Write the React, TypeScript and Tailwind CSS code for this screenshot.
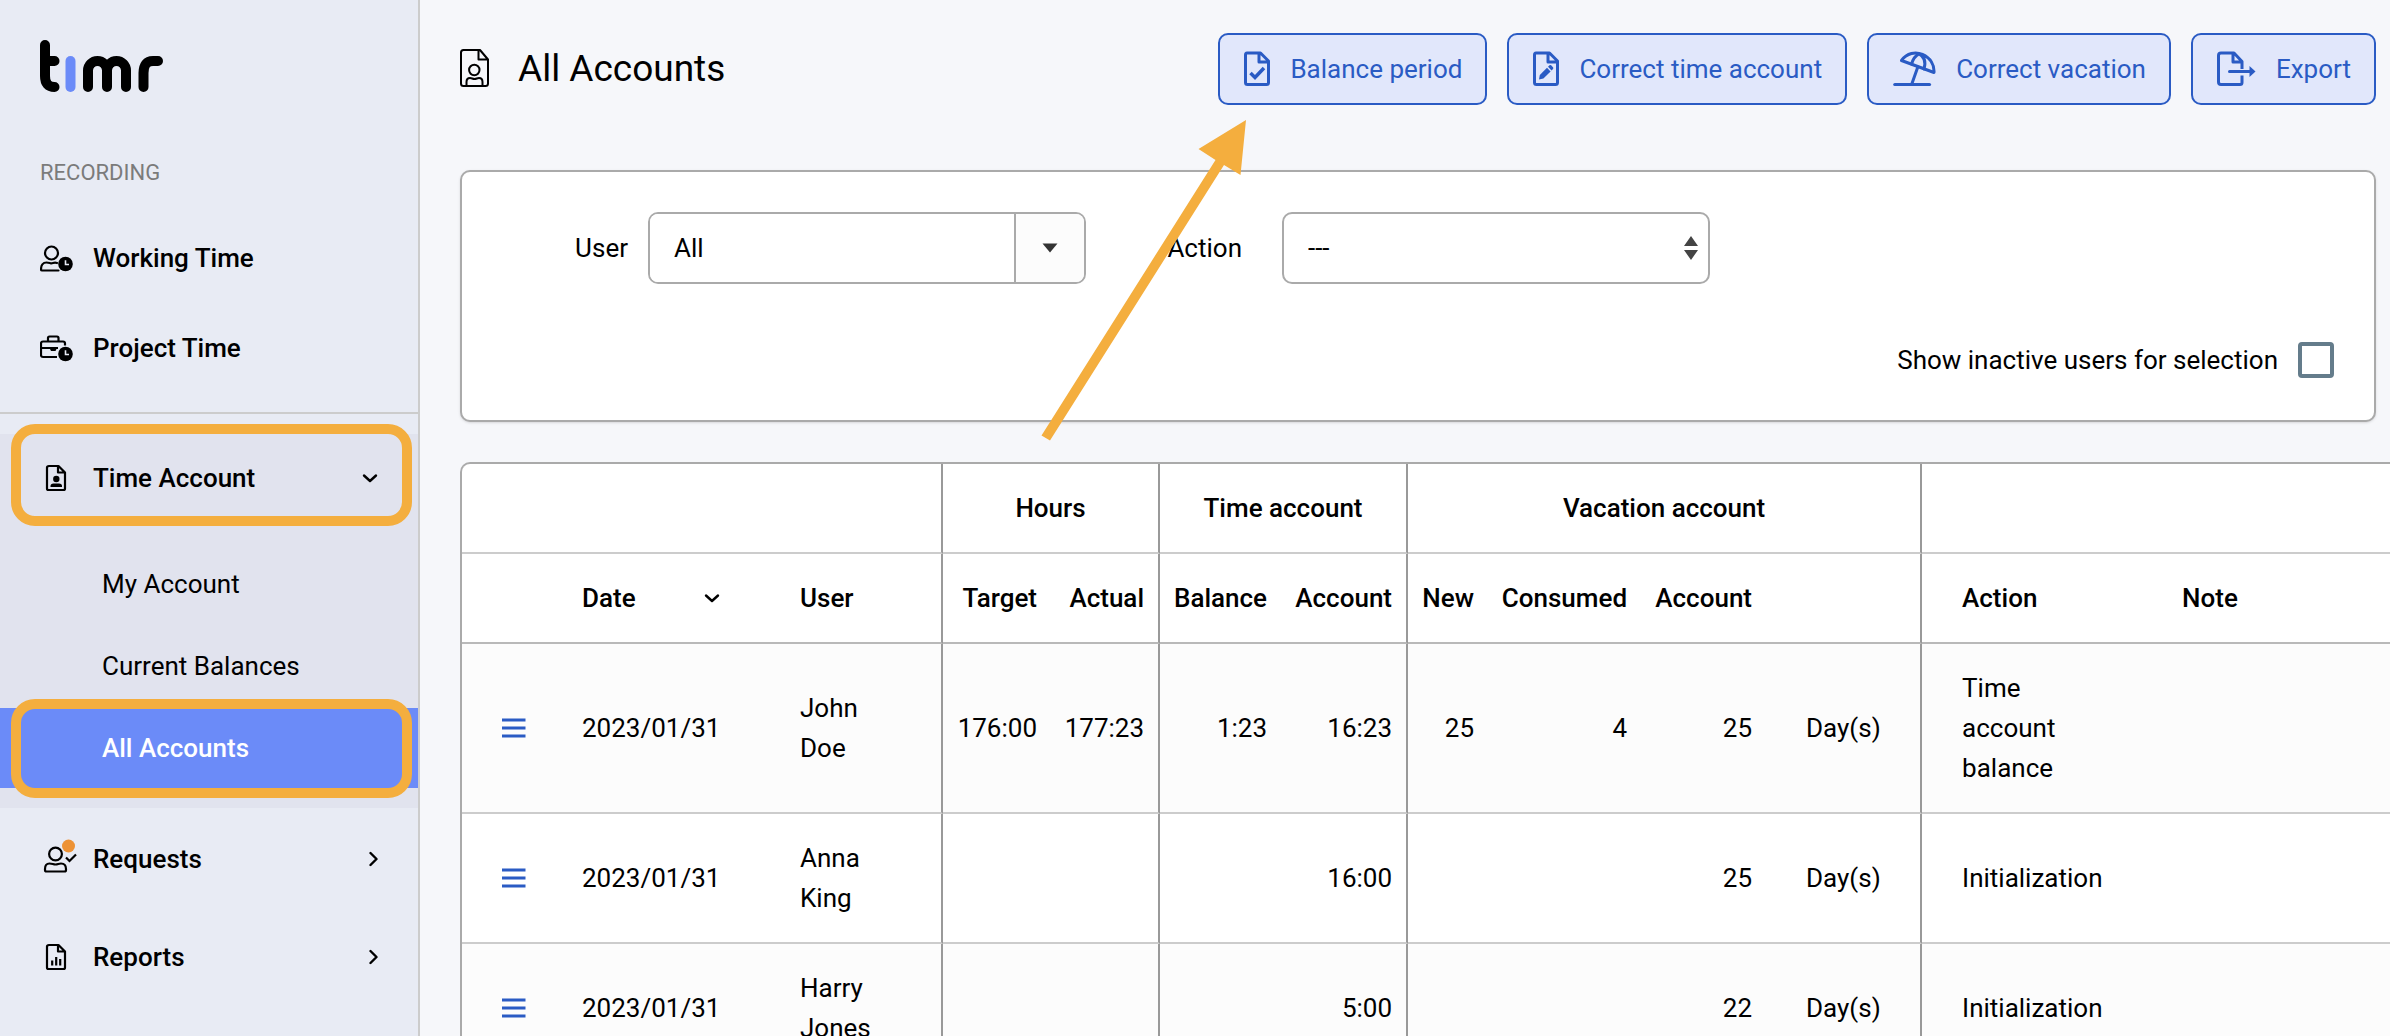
import React from "react";

type IconProps = { className?: string };

function Logo() {
  return (
    <svg width="124" height="52" viewBox="40 40 124 52" fill="none" strokeWidth="10" strokeLinecap="round" strokeLinejoin="round" role="img" aria-label="timr">
      <path d="M45 45V76Q45 87 54.500 87M45 61H54.500" stroke="#000" />
      <path d="M70.500 61V87" stroke="#6b8bf8" />
      <path d="M88 87V70.500a9.500 9.500 0 0 1 19 0V87M107 70.500a9.500 9.500 0 0 1 19 0V87" stroke="#000" />
      <path d="M143.500 87V73Q143.500 61 153 61H158" stroke="#000" />
    </svg>
  );
}

function ClockBadge() {
  return (
    <>
      <circle cx="25.500" cy="23" r="7.300" fill="currentColor" />
      <path d="M25.500 19.200V23.500H29" stroke="#e8ebf4" strokeWidth="1.600" fill="none" />
    </>
  );
}

function WorkingTimeIcon() {
  return (
    <svg width="38" height="34" viewBox="0 0 38 34" fill="none" className="shrink-0">
      <circle cx="11.500" cy="12" r="6.500" stroke="currentColor" strokeWidth="2.200" />
      <path d="M17 22C14 21 13 22.500 11 22.300C9.500 22 8.500 21.500 6.500 21.500C3 21.500 1 24.500 1 28.500Q1 29.500 2 29.500H18.500" stroke="currentColor" strokeWidth="2.200" strokeLinecap="round" />
      <ClockBadge />
    </svg>
  );
}

function ProjectTimeIcon() {
  return (
    <svg width="38" height="34" viewBox="0 0 38 34" fill="none" className="shrink-0">
      <path d="M25 14.500V12.500Q25 10.500 23 10.500H3Q1 10.500 1 12.500V24Q1 26 3 26H17M1 17H18M8 10V7Q8 5.500 9.500 5.500H17Q18.500 5.500 18.500 7V10" stroke="currentColor" strokeWidth="2.200" />
      <path d="M9.500 17H17L15.500 20H11Z" fill="currentColor" />
      <ClockBadge />
    </svg>
  );
}

function DocOutline() {
  return (
    <path d="M9 5H18.500L25 11.500V27.500Q25 29 23.500 29H8.500Q7 29 7 27.500V6.500Q7 5 9 5ZM18 5V11.500H25" stroke="currentColor" strokeWidth="2.200" strokeLinejoin="round" />
  );
}

function TimeAccountIcon() {
  return (
    <svg width="38" height="34" viewBox="0 0 38 34" fill="none" className="shrink-0">
      <DocOutline />
      <circle cx="16.300" cy="18" r="3.200" fill="currentColor" />
      <path d="M10.500 26V25Q10.500 22.500 13.500 22.500H19Q22 22.500 22 25V26Z" fill="currentColor" />
    </svg>
  );
}

function ReportsIcon() {
  return (
    <svg width="38" height="34" viewBox="0 0 38 34" fill="none" className="shrink-0">
      <DocOutline />
      <path d="M12.200 20.500V25.500M16.200 17V25.500M20.200 19V25.500" stroke="currentColor" strokeWidth="2.200" />
    </svg>
  );
}

function RequestsIcon() {
  return (
    <svg width="38" height="34" viewBox="0 0 38 34" fill="none" className="shrink-0 overflow-visible">
      <circle cx="15.500" cy="12" r="6.400" stroke="currentColor" strokeWidth="2.200" />
      <path d="M9.500 21.500C12.500 21.500 13 22.500 15.500 22.500S18.500 21.500 21 21.500C24.500 21.500 26 24 26 27V28Q26 29.500 24.500 29.500H6.500Q5 29.500 5 28V27C5 24 6.500 21.500 9.500 21.500Z" stroke="currentColor" strokeWidth="2.200" />
      <path d="M26 15.500L29.500 19L36 12.500" stroke="currentColor" strokeWidth="2.200" />
      <circle cx="28.500" cy="4" r="6.500" fill="#ed9235" />
    </svg>
  );
}

function ChevronDown({ className = "" }: IconProps) {
  return (
    <svg width="16" height="16" viewBox="0 0 16 16" fill="none" className={className}>
      <path d="M2 5.500L8 11L14 5.500" stroke="currentColor" strokeWidth="2.400" strokeLinecap="round" strokeLinejoin="round" />
    </svg>
  );
}

function ChevronRight({ className = "" }: IconProps) {
  return (
    <svg width="16" height="16" viewBox="0 0 16 16" fill="none" className={className}>
      <path d="M8.500 2L14.500 8L8.500 14" stroke="currentColor" strokeWidth="2.400" strokeLinecap="round" strokeLinejoin="round" />
    </svg>
  );
}

function TitleIcon() {
  return (
    <svg width="30" height="40" viewBox="0 0 30 40" fill="none" stroke="currentColor" strokeWidth="2" strokeLinejoin="round" className="shrink-0">
      <path d="M3.500 1H20L28 10.500V34.500Q28 37 25.500 37H3.500Q1 37 1 34.500V3.500Q1 1 3.500 1ZM18.500 1V10.500H28" />
      <circle cx="14.300" cy="21" r="5.200" />
      <path d="M6.500 36.500V33Q6.500 29 10 29C12 29 12.500 30 14.500 30S17 29 19 29Q22.500 29 22.500 33V36.500" />
    </svg>
  );
}

function ActionDocOutline() {
  return (
    <path d="M3 2H16.500L24.500 10V31.500Q24.500 33.500 22.500 33.500H3.500Q1.500 33.500 1.500 31.500V4Q1.500 2 3 2ZM15 2V11H24.500" stroke="currentColor" strokeWidth="3" strokeLinejoin="round" />
  );
}

function DocCheckIcon() {
  return (
    <svg width="26" height="36" viewBox="0 0 26 36" fill="none">
      <ActionDocOutline />
      <path d="M6.500 22L11 26.500L20 17" stroke="currentColor" strokeWidth="3.500" />
    </svg>
  );
}

function DocPenIcon() {
  return (
    <svg width="26" height="36" viewBox="0 0 26 36" fill="none">
      <ActionDocOutline />
      <path d="M6 28.500L6.800 24L14 16.800L17.600 20.400L10.400 27.600Z" fill="currentColor" />
      <path d="M15 15.800L16.500 14.300Q17.300 13.600 18.100 14.300L20 16.300Q20.700 17.100 20 17.900L18.600 19.400Z" fill="currentColor" />
    </svg>
  );
}

function BeachIcon() {
  return (
    <svg width="43" height="36" viewBox="0 0 43 36" fill="none" stroke="currentColor" strokeLinejoin="round" strokeLinecap="round">
      <path d="M8.500 9.500C14 2 22.500 0.500 29.500 3.500C37.500 7 41.500 14 41 21.500Z" strokeWidth="3" />
      <path d="M18.500 13C20 8 22.500 4.500 26 2.800C31.500 5.500 33 11 31 18" strokeWidth="3" />
      <path d="M24.800 16L18.800 33" strokeWidth="3" />
      <path d="M1.800 33.500H36.500" strokeWidth="3.200" />
    </svg>
  );
}

function ExportIcon() {
  return (
    <svg width="39" height="36" viewBox="0 0 39 36" fill="none" stroke="currentColor" strokeWidth="3" strokeLinejoin="round">
      <path d="M25 18V10.500L17 2H4Q1.500 2 1.500 4.500V31Q1.500 33.500 4 33.500H23Q25 33.500 25 31.500V24.500M16 2V11H25" />
      <path d="M12.500 20.500H34" strokeLinecap="round" />
      <path d="M32.500 15L38.500 20.500L32.500 26Z" fill="currentColor" stroke="none" />
    </svg>
  );
}

const actions = [
  { label: "Balance period", icon: <DocCheckIcon /> },
  { label: "Correct time account", icon: <DocPenIcon /> },
  { label: "Correct vacation", icon: <BeachIcon /> },
  { label: "Export", icon: <ExportIcon /> },
];

const rows = [
  { date: "2023/01/31", user: ["John", "Doe"], target: "176:00", actual: "177:23", balance: "1:23", account: "16:23", fresh: "25", consumed: "4", vacation: "25", action: "Time account balance" },
  { date: "2023/01/31", user: ["Anna", "King"], target: "", actual: "", balance: "", account: "16:00", fresh: "", consumed: "", vacation: "25", action: "Initialization" },
  { date: "2023/01/31", user: ["Harry", "Jones"], target: "", actual: "", balance: "", account: "5:00", fresh: "", consumed: "", vacation: "22", action: "Initialization" },
];

const navLink = "relative flex items-center gap-[15px] pl-10 pr-10 font-medium";
const subLink = "relative flex h-20 items-center pl-[102px]";
const ring = "pointer-events-none absolute left-[11px] right-[6px] z-10 rounded-[24px] border-[10px] border-[#f4ae3e]";
const groupHead = "border-b-2 border-[#ccc] px-[14px] py-6 font-medium";
const head = "border-b-2 border-[#b9b9b9] py-6 font-medium";
const cell = "border-b-2 border-[#ccc] py-6";
const groupEnd = "border-r-2 border-r-[#999]";

function Sidebar() {
  return (
    <aside className="w-[420px] shrink-0 border-r-2 border-[#ccc] bg-[#e8ebf4]">
      <a href="#home" className="mx-10 mt-10 block w-fit"><Logo /></a>
      <nav aria-label="Main">
        <h2 className="mt-[65px] pl-10 text-[22px] leading-8 text-[#7b7b7b]">RECORDING</h2>
        <div className="border-b-2 border-[#ccc] pt-6 pb-[19px]">
          <a href="#working-time" className={`${navLink} h-[90px]`}><WorkingTimeIcon />Working Time</a>
          <a href="#project-time" className={`${navLink} h-[90px]`}><ProjectTimeIcon />Project Time</a>
        </div>
        <div className="mt-5 bg-[#e1e3ee] pb-5">
          <button type="button" aria-expanded="true" className={`${navLink} h-[88px] w-full text-left`}>
            <TimeAccountIcon />Time Account
            <ChevronDown className="ml-auto" />
            <span className={`${ring} -top-[10px] -bottom-1`} />
          </button>
          <ul className="mt-[22px] flex flex-col gap-0.5">
            <li><a href="#my-account" className={subLink}>My Account</a></li>
            <li><a href="#current-balances" className={subLink}>Current Balances</a></li>
            <li>
              <a href="#all-accounts" aria-current="page" className={`${subLink} bg-[#6b8bf8] font-medium text-white`}>
                All Accounts
                <span className={`${ring} -top-[9px] -bottom-[10px]`} />
              </a>
            </li>
          </ul>
        </div>
        <div className="pt-0.5">
          <a href="#requests" className={`${navLink} h-[98px]`}><RequestsIcon />Requests<ChevronRight className="ml-auto" /></a>
          <a href="#reports" className={`${navLink} h-[98px]`}><ReportsIcon />Reports<ChevronRight className="ml-auto" /></a>
        </div>
      </nav>
    </aside>
  );
}

function Filters() {
  return (
    <form className="mr-[14px] rounded-[10px] border-2 border-[#aaa] bg-white px-10 pt-10 pb-6 shadow-sm">
      <div className="flex items-center">
        <label htmlFor="user" className="w-[126px] text-right">User</label>
        <div className="ml-5 flex h-[72px] w-[438px] overflow-hidden rounded-[10px] border-2 border-[#aaa]">
          <input id="user" type="text" defaultValue="All" className="min-w-0 flex-1 bg-white px-6 outline-none" />
          <button type="button" aria-label="Open user list" className="flex w-[70px] items-center justify-center border-l-2 border-[#aaa] bg-[#fcfcfc]">
            <svg width="16" height="10" viewBox="0 0 16 10"><path d="M0.500 0.500H15.500L8 9.500Z" fill="#333" /></svg>
          </button>
        </div>
        <label htmlFor="action" className="w-[156px] text-right">Action</label>
        <div className="relative ml-10 w-[428px]">
          <select id="action" className="h-[72px] w-full appearance-none rounded-[10px] border-2 border-[#aaa] bg-white px-6 outline-none">
            <option>---</option>
          </select>
          <svg width="14" height="24" viewBox="0 0 14 24" className="pointer-events-none absolute top-6 right-3"><path d="M7 0L14 10H0ZM7 24L14 14H0Z" fill="#444" /></svg>
        </div>
      </div>
      <div className="mt-10 flex h-[72px] items-center justify-end gap-5">
        <label htmlFor="inactive">Show inactive users for selection</label>
        <input id="inactive" type="checkbox" className="size-9 appearance-none rounded-[4px] border-4 border-[#647c8b] bg-white checked:bg-[#647c8b]" />
      </div>
    </form>
  );
}

function AccountsTable() {
  return (
    <div className="mt-10 overflow-hidden rounded-tl-[10px] border-t-2 border-l-2 border-[#aaa] bg-white">
      <table className="w-full table-fixed border-separate border-spacing-0 text-left leading-10">
        <colgroup>
          <col className="w-20" />
          <col className="w-[218px]" />
          <col className="w-[183px]" />
          <col className="w-[108px]" />
          <col className="w-[109px]" />
          <col className="w-[121px]" />
          <col className="w-[127px]" />
          <col className="w-20" />
          <col className="w-[153px]" />
          <col className="w-[125px]" />
          <col className="w-[156px]" />
          <col className="w-[220px]" />
          <col />
        </colgroup>
        <thead>
          <tr>
            <td colSpan={3} className={`${groupHead} ${groupEnd}`} />
            <th colSpan={2} scope="colgroup" className={`${groupHead} ${groupEnd} text-center`}>Hours</th>
            <th colSpan={2} scope="colgroup" className={`${groupHead} ${groupEnd} text-center`}>Time account</th>
            <th colSpan={4} scope="colgroup" className={`${groupHead} ${groupEnd} text-center`}>Vacation account</th>
            <td colSpan={2} className={groupHead} />
          </tr>
          <tr>
            <td className={head} />
            <th scope="col" className={`${head} px-10`}>
              <button type="button" className="flex w-full items-center justify-between">Date<ChevronDown /></button>
            </th>
            <th scope="col" className={`${head} ${groupEnd} pl-10`}>User</th>
            <th scope="col" className={`${head} pr-[14px] text-right`}>Target</th>
            <th scope="col" className={`${head} ${groupEnd} pr-[14px] text-right`}>Actual</th>
            <th scope="col" className={`${head} pr-[14px] text-right`}>Balance</th>
            <th scope="col" className={`${head} ${groupEnd} pr-[14px] text-right`}>Account</th>
            <th scope="col" className={`${head} pr-[14px] text-right`}>New</th>
            <th scope="col" className={`${head} pr-[14px] text-right`}>Consumed</th>
            <th scope="col" className={`${head} pr-[14px] text-right`}>Account</th>
            <td className={`${head} ${groupEnd}`} />
            <th scope="col" className={`${head} pl-10`}>Action</th>
            <th scope="col" className={`${head} pl-10`}>Note</th>
          </tr>
        </thead>
        <tbody>
          {rows.map((r) => (
            <tr key={r.user.join()} className="odd:bg-[#fcfcfc]">
              <td className={`${cell} pl-10`}>
                <button type="button" aria-label="Row menu" className="flex h-10 items-center text-[#2a5bc4]">
                  <svg width="24" height="20" viewBox="0 0 24 20"><path d="M0 2H23.500M0 10H23.500M0 18H23.500" stroke="currentColor" strokeWidth="3" /></svg>
                </button>
              </td>
              <td className={`${cell} pl-10`}>{r.date}</td>
              <td className={`${cell} ${groupEnd} pl-10`}>{r.user[0]}<br />{r.user[1]}</td>
              <td className={`${cell} pr-[14px] text-right`}>{r.target}</td>
              <td className={`${cell} ${groupEnd} pr-[14px] text-right`}>{r.actual}</td>
              <td className={`${cell} pr-[14px] text-right`}>{r.balance}</td>
              <td className={`${cell} ${groupEnd} pr-[14px] text-right`}>{r.account}</td>
              <td className={`${cell} pr-[14px] text-right`}>{r.fresh}</td>
              <td className={`${cell} pr-[14px] text-right`}>{r.consumed}</td>
              <td className={`${cell} pr-[14px] text-right`}>{r.vacation}</td>
              <td className={`${cell} ${groupEnd} pl-10`}>Day(s)</td>
              <td className={`${cell} px-10`}>{r.action}</td>
              <td className={cell} />
            </tr>
          ))}
        </tbody>
      </table>
    </div>
  );
}

export default function App() {
  return (
    <div className="flex h-screen overflow-hidden bg-[#f6f7fa] font-['Roboto',sans-serif] text-[26px] leading-10 text-black">
      <Sidebar />
      <main className="relative min-w-0 flex-1 pt-[33px] pl-10">
        <header className="mr-[14px] mb-[65px] flex items-center justify-between">
          <div className="flex items-center gap-7">
            <TitleIcon />
            <h1 className="text-[37px] leading-[48px]">All Accounts</h1>
          </div>
          <div className="flex gap-5">
            {actions.map((a) => (
              <button key={a.label} type="button" className="flex h-[72px] items-center gap-5 rounded-[10px] border-2 border-[#2a5bc4] bg-[#e1e7fb] pr-[23px] pl-6 text-[#2a5bc4]">
                {a.icon}
                {a.label}
              </button>
            ))}
          </div>
        </header>
        <Filters />
        <AccountsTable />
        <svg width="206" height="322" viewBox="0 0 206 322" className="pointer-events-none absolute top-[120px] left-[621px]" aria-hidden="true">
          <path d="M205 0L199.500 55L183 45L9 320.500L0.500 315.500L174.500 40L157.500 29Z" transform="translate(0 0)" fill="#f4ae3e" />
        </svg>
      </main>
    </div>
  );
}
